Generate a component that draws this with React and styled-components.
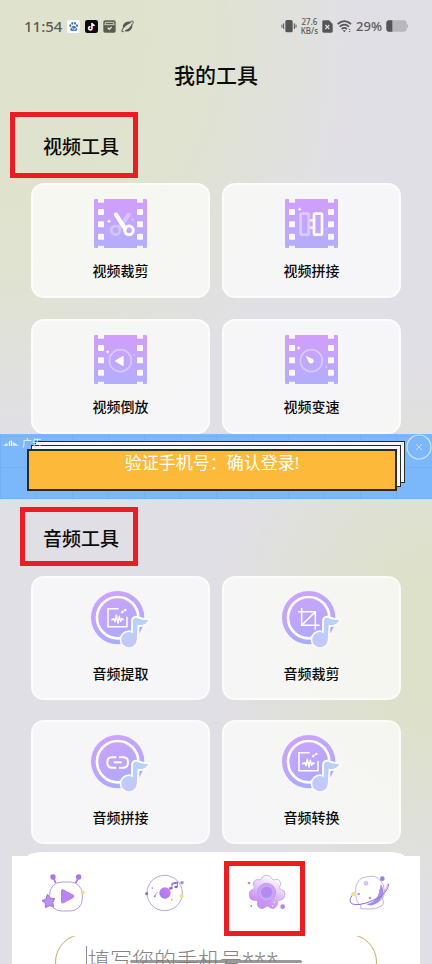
import React, { useState } from 'react'
import styled, { createGlobalStyle, css } from 'styled-components'

const GlobalStyle = createGlobalStyle`
  * {
    box-sizing: border-box;
  }

  body {
    margin: 0;
    font-family: 'Noto Sans', 'Noto Sans CJK SC', sans-serif;
    color: #0b0b0b;
  }

  button {
    border: 0;
    padding: 0;
    background: none;
    font: inherit;
    color: inherit;
    cursor: pointer;
  }

  svg {
    display: block;
    flex: none;
  }
`

const Page = styled.div`
  position: relative;
  height: 100vh;
  overflow: hidden;
  background:
    radial-gradient(ellipse 360px 400px at 0 40px, #dfe3cd 0%, #dfe3cf 55%, rgba(225, 223, 231, 0) 100%),
    radial-gradient(ellipse 220px 280px at 100% 640px, #dde1c9 0%, #dde1cb 30%, rgba(225, 223, 231, 0) 100%),
    #e1dfe6;
`

const StatusBar = styled.header`
  display: flex;
  align-items: center;
  justify-content: space-between;
  padding: 14px 24px 0;
  height: 38px;
  color: #595b55;
`

const StatusGroup = styled.div`
  display: flex;
  align-items: center;
  gap: ${props => (props.$tight ? '4px' : '5px')};
`

const Time = styled.span`
  font-size: 15px;
  font-weight: 500;
  line-height: 20px;
`

const Speed = styled.span`
  display: flex;
  flex-direction: column;
  align-items: center;
  font-size: 8px;
  font-weight: 500;
  line-height: 9px;
`

const Percent = styled.span`
  font-size: 13px;
  font-weight: 500;
  line-height: 20px;
`

const Title = styled.h1`
  margin: 21px 0;
  font-size: 21px;
  font-weight: 500;
  line-height: 32px;
  text-align: center;
`

const redBorder = css`
  border: 5px solid #ea1d25;
`

const SectionTitle = styled.h2`
  ${redBorder}
  width: fit-content;
  margin: ${props => (props.$large ? '0 0 0 10px' : '8px 0 0 20px')};
  padding: ${props => (props.$large ? '15px 14px 11px 28px' : '13px 14px 8px 18px')};
  font-size: 19px;
  font-weight: 500;
  line-height: ${props => (props.$large ? '30px' : '28px')};
`

const ToolGrid = styled.div`
  display: grid;
  grid-template-columns: 1fr 1fr;
  grid-auto-rows: ${props => (props.$tall ? '124px' : '115px')};
  gap: ${props => (props.$tall ? '20px' : '21px')} 12px;
  margin-top: ${props => (props.$tall ? '10px' : '5px')};
  padding: 0 31px;
`

const ToolCard = styled.button`
  display: flex;
  flex-direction: column;
  align-items: center;
  justify-content: center;
  gap: ${props => (props.$tall ? '15px' : '13px')};
  padding-bottom: 2px;
  border: 2px solid rgba(255, 255, 255, 0.6);
  border-radius: 13px;
  background: rgba(255, 255, 255, 0.7);
`

const ToolName = styled.span`
  font-size: 14px;
  font-weight: 500;
  line-height: 20px;
`

const Ad = styled.aside`
  position: relative;
  height: 65px;
  padding: 15px 35px 8px 27px;
  background:
    repeating-linear-gradient(90deg, rgba(70, 140, 225, 0.15) 0 1px, transparent 1px 36px),
    repeating-linear-gradient(0deg, rgba(70, 140, 225, 0.12) 0 1px, transparent 1px 31px),
    #7ab7fb;
`

const AdTag = styled.span`
  position: absolute;
  top: 3px;
  left: 3px;
  display: flex;
  align-items: center;
  gap: 3px;
  color: #e4f3ff;
  font-size: 10px;
  line-height: 12px;
`

const AdBody = styled.a`
  display: block;
  height: 42px;
  border: 2px solid #2b2b22;
  background: #fdba3a;
  box-shadow:
    4px -4px 0 -1px #f4faff,
    4px -4px 0 0 #2b2b22,
    8px -8px 0 -1px #f4faff,
    8px -8px 0 0 #2b2b22;
  color: #fff;
  font-size: 17px;
  line-height: 23px;
  text-align: center;
  text-decoration: none;
`

const AdClose = styled.button`
  position: absolute;
  top: 0;
  right: 0;
`

const Sheet = styled.footer`
  margin: 8px 12px 0;
`

const SheetCap = styled.div`
  height: 4px;
  margin: 0 16px;
  border-radius: 16px 16px 0 0 / 4px 4px 0 0;
  background: #fff;
`

const SheetBody = styled.div`
  background: #fff;
`

const Nav = styled.nav`
  display: grid;
  grid-template-columns: repeat(4, 1fr);
  justify-items: center;
  align-items: center;
  padding-top: 5px;
`

const NavButton = styled.button`
  display: flex;
  align-items: center;
  justify-content: center;
  width: 81px;
  height: 75px;
  padding-bottom: 11px;
  ${props => props.$active && css`
    ${redBorder}
    margin-right: 5px;
    padding-left: 5px;
  `}
`

const Form = styled.form`
  height: 60px;
  padding: 0 43px;
  overflow: hidden;
`

const Field = styled.label`
  display: flex;
  align-items: center;
  height: 56px;
  margin-top: -2px;
  padding: 0 30px 6px;
  border: 1px solid #c9a662;
  border-radius: 28px;
`

const Caret = styled.span`
  width: 1px;
  height: 26px;
  background: #8b8b8b;
`

const PhoneInput = styled.input`
  flex: 1;
  min-width: 0;
  border: 0;
  padding: 0 0 0 1px;
  background: none;
  outline: none;
  font-family: 'Noto Sans', 'Noto Sans CJK SC', sans-serif;
  font-size: 22px;
  font-weight: 300;
  line-height: 32px;

  &::placeholder {
    color: #858585;
    opacity: 1;
  }
`

const HomeBar = styled.div`
  position: absolute;
  left: 30%;
  right: 30%;
  bottom: 1px;
  height: 3px;
  border-radius: 2px;
  background: rgba(120, 120, 120, 0.75);
`

const Spark = ({ x, y, r = 6, o = 1 }) => (
  <path
    d={`M${x} ${y - r}Q${x + 1} ${y - 1} ${x + r} ${y}Q${x + 1} ${y + 1} ${x} ${y + r}Q${x - 1} ${y + 1} ${x - r} ${y}Q${x - 1} ${y - 1} ${x} ${y - r}Z`}
    fill="#fff"
    opacity={o}
  />
)

const Film = ({ id, children }) => (
  <svg width="53" height="49" viewBox="0 0 159 147" fill="none">
    <defs>
      <linearGradient id={id} x1="0" y1="0" x2="0" y2="1">
        <stop offset="0" stopColor="#d29efd" />
        <stop offset="1" stopColor="#b2aefc" />
      </linearGradient>
    </defs>
    <path
      d="M4 0H12V11H30V0H129V11H147V0H155Q159 0 159 4V143Q159 147 155 147H147V140H129V147H30V140H12V147H4Q0 147 0 143V4Q0 0 4 0Z"
      fill={`url(#${id})`}
    />
    {[30, 67, 104].map(y => (
      <g key={y} fill="#faf9fd">
        <rect x="12" y={y} width="18" height="18" rx="2" />
        <rect x="129" y={y} width="18" height="18" rx="2" />
      </g>
    ))}
    {children}
  </svg>
)

const Disc = ({ id, children }) => (
  <svg width="60" height="58" viewBox="0 0 180 174" fill="none">
    <defs>
      <linearGradient id={id} x1="0.2" y1="0" x2="0.6" y2="1">
        <stop offset="0" stopColor="#d0a2fc" />
        <stop offset="1" stopColor="#aaaafb" />
      </linearGradient>
      <linearGradient id={`${id}-note`} gradientUnits="userSpaceOnUse" x1="0" y1="80" x2="0" y2="168">
        <stop offset="0" stopColor="#b6d4fa" />
        <stop offset="1" stopColor="#c3c6fd" />
      </linearGradient>
    </defs>
    <circle cx="80" cy="80" r="80" fill={`url(#${id})`} />
    <circle cx="80" cy="80" r="62" stroke="#fff" strokeWidth="8" />
    <g stroke="#fff" strokeWidth="4.5">{children}</g>
    <g stroke="#fbfbff" strokeWidth="12" strokeLinejoin="round">
      <circle cx="114" cy="146" r="22" />
      <path d="M126 146V92Q126 80 136 80C148 84 158 88 172 87C167 99 155 104 140 101L137 146Z" />
    </g>
    <g fill={`url(#${id}-note)`}>
      <circle cx="114" cy="146" r="23" />
      <path d="M126 146V92Q126 80 136 80C148 84 158 88 172 87C167 99 155 104 140 101L137 146Z" />
    </g>
  </svg>
)

const WaveFrame = () => (
  <>
    <path d="M83 53H51V107H108V77" />
    <path d="M61 87L68 83L72 92L76 73L81 96L85 76L89 91L93 83L98 87" strokeLinejoin="round" />
    <path d="M91 66L97 60M99 59L106 55" strokeWidth="6" />
  </>
)

const videoTools = [
  {
    name: '视频裁剪',
    icon: (
      <Film id="film-cut">
        <g stroke="#fff" strokeWidth="8" opacity="0.35">
          <path d="M104 47L78 84" strokeWidth="12" strokeLinecap="round" />
          <circle cx="65" cy="94" r="13" />
        </g>
        <g stroke="#fff" strokeWidth="9">
          <path d="M66 47L93 88" strokeWidth="13" strokeLinecap="round" />
          <circle cx="105" cy="94" r="13" />
        </g>
        <Spark x={45} y={67} />
        <Spark x={116} y={62} r={4} o={0.5} />
      </Film>
    ),
  },
  {
    name: '视频拼接',
    icon: (
      <Film id="film-join">
        <g stroke="#fff" strokeWidth="8">
          <rect x="47" y="44" width="24" height="63" rx="2" opacity="0.4" />
          <path d="M75 64H84M75 86H84" opacity="0.75" />
          <rect x="87" y="44" width="24" height="63" rx="2" />
        </g>
        <Spark x={44} y={31} />
        <Spark x={123} y={90} r={4} o={0.4} />
      </Film>
    ),
  },
  {
    name: '视频倒放',
    icon: (
      <Film id="film-reverse">
        <circle cx="79" cy="77" r="33" stroke="#fff" strokeWidth="5" opacity="0.38" />
        <path d="M65 78L87 65V91Z" fill="#fff" stroke="#fff" strokeWidth="4" strokeLinejoin="round" />
        <Spark x={41} y={50} />
        <Spark x={120} y={60} r={4} o={0.4} />
      </Film>
    ),
  },
  {
    name: '视频变速',
    icon: (
      <Film id="film-speed">
        <circle cx="79" cy="77" r="33" stroke="#fff" strokeWidth="5" opacity="0.38" />
        <path d="M62 62L82 71A8 8 0 1 1 71 82Z" fill="#fff" />
        <Spark x={41} y={39} />
        <Spark x={124} y={96} r={4} o={0.4} />
      </Film>
    ),
  },
]

const audioTools = [
  { name: '音频提取', icon: <Disc id="disc-extract"><WaveFrame /></Disc> },
  {
    name: '音频裁剪',
    icon: (
      <Disc id="disc-crop">
        <path d="M48 62H100V116M59 51V103H113M63 99L97 65" />
      </Disc>
    ),
  },
  {
    name: '音频拼接',
    icon: (
      <Disc id="disc-link">
        <path d="M76 67H62Q49 67 49 82Q49 98 62 98H76M84 67H98Q111 67 111 82Q111 98 98 98H84" strokeWidth="6" />
        <path d="M68 82H92" strokeWidth="6" />
      </Disc>
    ),
  },
  { name: '音频转换', icon: <Disc id="disc-convert"><WaveFrame /></Disc> },
]

const VideoNavIcon = () => (
  <svg width="44" height="38" viewBox="0 0 132 114" fill="none">
    <path d="M37 10L44 27M113 10L104 27" stroke="#a878e2" strokeWidth="5" />
    <circle cx="36" cy="9" r="8" fill="#a878e2" />
    <circle cx="113" cy="9" r="8" fill="#a878e2" />
    <rect x="26" y="24" width="98" height="87" rx="36" fill="#fffeff" stroke="#a98ad6" strokeWidth="2.5" />
    <path d="M62 51Q62 46 67 48L96 64Q100 67 96 70L67 86Q62 88 62 83Z" fill="#b983f3" stroke="#b983f3" strokeWidth="4" />
    <circle cx="125" cy="56" r="6" fill="#f2dc8c" />
    <path d="M19 61L28 72L41 74L35 86L38 98L25 95L14 101L13 88L3 80L15 75Z" fill="#bb91f0" stroke="#9a70dc" strokeWidth="3" strokeLinejoin="round" />
  </svg>
)

const MusicNavIcon = () => (
  <svg width="40" height="38" viewBox="0 0 120 114" fill="none">
    <defs>
      <linearGradient id="nav-music" x1="0" y1="1" x2="1" y2="0">
        <stop stopColor="#9d7be9" />
        <stop offset="1" stopColor="#d07df5" />
      </linearGradient>
    </defs>
    <circle cx="59" cy="57" r="53" stroke="#a992da" strokeWidth="2.5" />
    <circle cx="60" cy="57" r="17" fill="url(#nav-music)" />
    <path d="M81 43V28L97 24V39M81 31L97 27" stroke="#8e68cf" strokeWidth="3" />
    <ellipse cx="77" cy="43" rx="5" ry="4" fill="#8e68cf" />
    <ellipse cx="93" cy="39" rx="5" ry="4" fill="#8e68cf" />
    <path d="M30 66L34 57L39 55" stroke="#a992da" strokeWidth="2" />
    <circle cx="29" cy="67" r="3" fill="#9874dd" />
    <circle cx="5" cy="59" r="5" fill="#9874dd" />
    <circle cx="111" cy="26" r="5" fill="#a584dc" />
    <circle cx="22" cy="42" r="2.5" fill="#9874dd" />
    <circle cx="80" cy="77" r="2.5" fill="#b89ae7" />
    <circle cx="110" cy="66" r="6" fill="#f2dc8c" />
  </svg>
)

const GearNavIcon = () => (
  <svg width="40" height="38" viewBox="0 0 120 114" fill="none">
    <defs>
      <linearGradient id="nav-gear" x1="0.7" y1="0" x2="0.35" y2="0.8">
        <stop offset="0.1" stopColor="#fdfbff" />
        <stop offset="1" stopColor="#c991f5" />
      </linearGradient>
      <linearGradient id="nav-gear-core" x1="0" y1="0" x2="0" y2="1">
        <stop stopColor="#bd83ee" />
        <stop offset="1" stopColor="#a990f5" />
      </linearGradient>
    </defs>
    <path
      d="M45 12Q47 4 59 4Q71 4 73 12Q76 20 85 17Q94 13 99 22Q104 31 98 38Q95 45 104 47Q114 48 114 61Q113 74 105 77Q94 77 92 84Q94 94 84 101Q76 107 70 101Q61 93 53 101Q46 107 37 101Q28 96 32 84Q30 77 18 79Q8 77 7 64Q5 52 13 48Q23 47 22 39Q16 32 20 24Q25 14 35 17Q43 20 45 12Z"
      fill="url(#nav-gear)"
      stroke="#b19adb"
      strokeWidth="2"
    />
    <circle cx="59" cy="55" r="27" fill="#cda5f5" stroke="#b48be8" strokeWidth="2" />
    <circle cx="59" cy="55" r="17" fill="url(#nav-gear-core)" />
    <circle cx="6" cy="27" r="4" fill="#b48be8" />
    <circle cx="13" cy="96" r="3" fill="#a584dc" />
    <circle cx="107" cy="98" r="7" fill="#b983eb" />
    <circle cx="82" cy="85" r="2" fill="#fff" />
    <circle cx="77" cy="96" r="2" fill="#fff" />
  </svg>
)

const PlanetNavIcon = () => (
  <svg width="42" height="38" viewBox="0 0 126 114" fill="none">
    <path d="M98 29Q109 46 105 64Q98 87 72 94Q61 95 55 90Q93 86 98 29Z" fill="#a48cf3" />
    <path d="M23 49Q21 32 34 18Q43 8 60 8Q82 3 95 17Q110 31 109 51Q109 67 102 75Q111 84 101 96Q83 107 62 105L38 104Q43 95 32 89Q22 78 23 49Z" stroke="#a68dda" strokeWidth="2" />
    <path d="M18 58Q2 74 8 86Q18 97 51 88Q93 76 110 56Q124 37 121 29" stroke="#8e70d5" strokeWidth="3" />
    <path d="M60 84Q92 73 108 53Q118 40 119 30" stroke="#d187ef" strokeWidth="2" />
    <circle cx="54" cy="28" r="6" fill="#d8c8f7" stroke="#b5a0e4" strokeWidth="1.5" />
    <circle cx="32" cy="60" r="4" fill="#ad99e6" />
    <circle cx="66" cy="72" r="4" fill="#ad99e6" />
    <circle cx="95" cy="50" r="3" fill="#ad99e6" />
    <circle cx="103" cy="14" r="7" fill="#a17ddf" />
    <circle cx="17" cy="60" r="7" fill="#f0e391" />
  </svg>
)

const navItems = [
  { name: '视频', icon: <VideoNavIcon /> },
  { name: '音乐', icon: <MusicNavIcon /> },
  { name: '工具', icon: <GearNavIcon />, active: true },
  { name: '我的', icon: <PlanetNavIcon /> },
]

const StatusIcons = () => (
  <>
    <svg width="13" height="13" viewBox="0 0 39 39">
      <rect width="39" height="39" rx="7" fill="#fdfdff" />
      <g fill="#3c77bd">
        <ellipse cx="10" cy="17" rx="3" ry="4" />
        <ellipse cx="16" cy="10" rx="3" ry="4" />
        <ellipse cx="24" cy="10" rx="3" ry="4" />
        <ellipse cx="30" cy="17" rx="3" ry="4" />
        <path d="M20 17Q25 17 28 23Q33 28 29 32Q26 34 20 32Q13 34 10 31Q8 27 13 23Q16 17 20 17Z" />
      </g>
      <path d="M16 23V29M21 24V29H25V24" stroke="#fff" strokeWidth="2" fill="none" />
    </svg>
    <svg width="13" height="13" viewBox="0 0 39 39" fill="none">
      <rect width="39" height="39" rx="7" fill="#0c0b12" />
      <path d="M20 9V25A5 5 0 1 1 15 20M20 9Q22 16 28 16" stroke="#39d8df" strokeWidth="4" />
      <path d="M22 10V26A5 5 0 1 1 17 21M22 10Q24 17 30 17" stroke="#ea4b6c" strokeWidth="4" />
      <path d="M21 9V25A5 5 0 1 1 16 20M21 9Q23 16 29 16" stroke="#fff" strokeWidth="3.5" />
    </svg>
    <svg width="13" height="13" viewBox="0 0 39 39" fill="none">
      <rect x="1" y="1" width="37" height="37" rx="5" fill="#5a5c52" />
      <path d="M7 13V7H32V13M4 14H35" stroke="#dfe3cd" strokeWidth="2.5" />
      <path d="M14 23L19 28L26 21" stroke="#dfe3cd" strokeWidth="4" />
    </svg>
    <svg width="13" height="13" viewBox="0 0 39 39" fill="none">
      <path d="M6 26Q3 13 14 7Q23 2 31 8Q17 13 6 26Z" fill="#5a5c52" />
      <path d="M33 12Q37 25 26 32Q18 37 10 32Q25 27 33 12Z" fill="#5a5c52" />
      <path d="M8 35Q0 37 3 30L8 22M28 5Q37 0 37 6Q36 11 31 17" stroke="#5a5c52" strokeWidth="3" />
    </svg>
  </>
)

const VibrateIcon = () => (
  <svg width="16" height="14" viewBox="0 0 48 42" fill="none" stroke="#555458" strokeWidth="3">
    <rect x="13" y="3" width="22" height="37" rx="5" fill="#555458" stroke="none" />
    <path d="M8 13V30M3 17V26M40 13V30M45 17V26" />
  </svg>
)

const SimIcon = () => (
  <svg width="11" height="13" viewBox="0 0 33 39" fill="none">
    <path d="M5 1H21L32 12V34Q32 38 28 38H5Q1 38 1 34V5Q1 1 5 1Z" fill="#555458" />
    <path d="M10 15L22 27M22 15L10 27" stroke="#e1e0e4" strokeWidth="3.5" />
  </svg>
)

const WifiIcon = () => (
  <svg width="15" height="13" viewBox="0 0 45 39" fill="none" stroke="#555458" strokeWidth="5">
    <path d="M2 12Q22 -5 42 12M8 20Q22 8 36 20M14 27Q22 20 30 27" />
    <path d="M17 31H27L22 37Z" fill="#555458" stroke="none" />
    <path d="M35 30L38 26L41 30ZM35 33L38 37L41 33Z" fill="#555458" stroke="none" />
  </svg>
)

const BatteryIcon = () => (
  <svg width="22" height="12" viewBox="0 0 66 36" fill="none">
    <path d="M9 1H53Q62 1 62 10V26Q62 35 53 35H9Q1 35 1 26V10Q1 1 9 1Z" fill="#b8b7bb" />
    <path d="M19 1H9Q1 1 1 10V26Q1 35 9 35H19Z" fill="#555458" />
    <path d="M63 12Q66 13 66 18Q66 23 63 24Z" fill="#a5a4a8" />
  </svg>
)

const Tools = ({ tools, tall }) => (
  <ToolGrid $tall={tall}>
    {tools.map(tool => (
      <ToolCard key={tool.name} type="button" $tall={tall}>
        {tool.icon}
        <ToolName>{tool.name}</ToolName>
      </ToolCard>
    ))}
  </ToolGrid>
)

export default function App() {
  const [phone, setPhone] = useState('')

  return (
    <Page>
      <GlobalStyle />
      <StatusBar>
        <StatusGroup>
          <Time>11:54</Time>
          <StatusIcons />
        </StatusGroup>
        <StatusGroup $tight>
          <VibrateIcon />
          <Speed>
            <span>27.6</span>
            <span>KB/s</span>
          </Speed>
          <SimIcon />
          <WifiIcon />
          <Percent>29%</Percent>
          <BatteryIcon />
        </StatusGroup>
      </StatusBar>
      <main>
        <Title>我的工具</Title>
        <SectionTitle $large>视频工具</SectionTitle>
        <Tools tools={videoTools} />
        <Ad>
          <AdBody href="#login">验证手机号：确认登录!</AdBody>
          <AdTag>
            <svg width="16" height="7" viewBox="0 0 48 21" fill="#e4f3ff">
              <path d="M0 17L12 9L15 17ZM17 17V6L21 2V18ZM23 18V0L28 4V18ZM30 17V6L48 17Z" />
            </svg>
            广告
          </AdTag>
          <AdClose type="button" aria-label="关闭广告">
            <svg width="26" height="26" viewBox="0 0 26 26" fill="none" stroke="#cde5fd">
              <circle cx="13" cy="13" r="12" strokeWidth="1.2" />
              <path d="M10 10L16 16M16 10L10 16" strokeWidth="0.8" />
            </svg>
          </AdClose>
        </Ad>
        <SectionTitle>音频工具</SectionTitle>
        <Tools tools={audioTools} tall />
      </main>
      <Sheet>
        <SheetCap />
        <SheetBody>
          <Nav>
            {navItems.map(item => (
              <NavButton key={item.name} type="button" aria-label={item.name} $active={item.active}>
                {item.icon}
              </NavButton>
            ))}
          </Nav>
          <Form>
            <Field>
              <Caret />
              <PhoneInput
                type="tel"
                aria-label="手机号"
                placeholder="填写您的手机号***"
                value={phone}
                onChange={e => setPhone(e.target.value)}
              />
            </Field>
          </Form>
        </SheetBody>
      </Sheet>
      <HomeBar />
    </Page>
  )
}
